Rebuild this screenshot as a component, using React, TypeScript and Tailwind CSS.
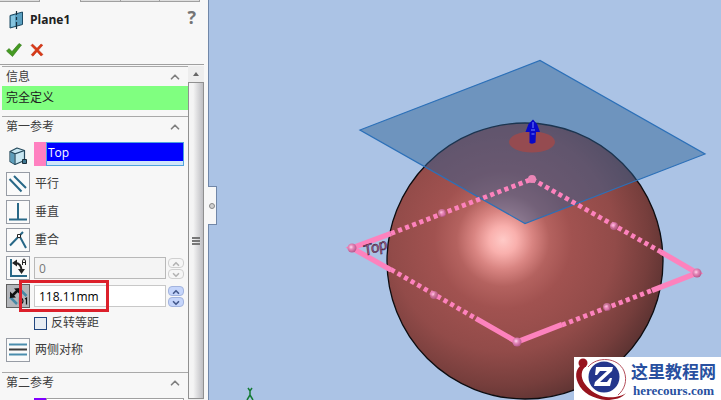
import type { ReactNode } from "react";
import { ChevronDown, ChevronUp } from "lucide-react";

type SectionHeaderProps = {
  title: string;
};

type ConstraintButtonProps = {
  label: string;
  pressed?: boolean;
  children: ReactNode;
};

type SpinnerProps = {
  name: string;
  disabled?: boolean;
};

const edgeMidpoints = [
  [442, 213],
  [614, 226],
  [434, 295],
  [607, 307],
];

const planeCorners = [
  [352, 248],
  [697, 273],
  [517, 342],
];

function SectionHeader({ title }: SectionHeaderProps) {
  return (
    <div className="flex h-5 shrink-0 items-center justify-between border-t border-[#a9a9a9] pr-1.5 pl-1">
      <h2>{title}</h2>
      <button type="button" aria-label={`Collapse ${title}`}>
        <ChevronUp className="h-3.5 w-3.5 text-[#808080]" strokeWidth={3} />
      </button>
    </div>
  );
}

function ConstraintButton({ label, pressed, children }: ConstraintButtonProps) {
  return (
    <button
      type="button"
      aria-label={label}
      aria-pressed={pressed ?? false}
      className={`h-6 w-6 shrink-0 border ${
        pressed ? "border-[#606060] bg-[#b4b6ba]" : "border-[#979ca5] bg-[#fafafa]"
      }`}
    >
      <svg viewBox="0 0 22 22" className="block h-full w-full" fill="none">
        {children}
      </svg>
    </button>
  );
}

function Spinner({ name, disabled }: SpinnerProps) {
  const tone = disabled
    ? "border-[#d0d0d0] bg-[#f6f6f6] text-[#b4b4b4]"
    : "border-[#a3b4de] bg-[#c5d5fb] text-[#44598c]";

  return (
    <div className="flex w-4 shrink-0 flex-col gap-px">
      <button
        type="button"
        disabled={disabled}
        aria-label={`Increase ${name}`}
        className={`grid h-2.5 place-items-center rounded-sm border ${tone}`}
      >
        <ChevronUp className="h-2.5 w-2.5" strokeWidth={4} />
      </button>
      <button
        type="button"
        disabled={disabled}
        aria-label={`Decrease ${name}`}
        className={`grid h-2.5 place-items-center rounded-sm border ${tone}`}
      >
        <ChevronDown className="h-2.5 w-2.5" strokeWidth={4} />
      </button>
    </div>
  );
}

function PlaneIcon() {
  return (
    <svg viewBox="0 0 16 20" className="h-5 w-4" fill="none">
      <path d="M2 5.500 14.500 2v12.500L2 18z" fill="#5a9fc0" stroke="#1c4a63" />
      <path d="M3 6.300 7 5.200v10.500L3 16.700z" fill="#85c4df" />
      <path d="M8.500 1v4M8.500 7v3M8.500 12v7" stroke="#16303f" strokeWidth="1.200" />
    </svg>
  );
}

function CubeIcon() {
  return (
    <svg viewBox="0 0 20 20" className="h-5 w-5" fill="none">
      <path
        d="M2 5.500 9 2l7.500 2.500v10L7 18.500 2 15.500z"
        fill="#c9e8f3"
        stroke="#24495c"
        strokeWidth="1.200"
        strokeLinejoin="round"
      />
      <path d="M2.500 6 6.500 8v10L2.500 15.500z" fill="#5b9dbb" />
      <path d="m2 5.500 5 2.300 9.500-3.300M7 8v10.500" stroke="#24495c" strokeWidth="1.200" />
      <path d="M14.500 13.500h4v4h-4z" fill="#3e7791" stroke="#1b303b" />
    </svg>
  );
}

function ReferencePanel() {
  return (
    <aside className="relative flex w-[209px] shrink-0 flex-col border-r border-[#7187a8] bg-[#f7f7f7] font-['Open_Sans','Noto_Sans_CJK_SC',sans-serif] text-xs text-[#3c3c3c]">
      <div className="flex h-0.5 shrink-0 pr-2">
        <div className="w-10 border-r border-b border-[#a0a0a0] bg-[#dedede]" />
        <div className="w-10" />
        <div className="flex-1 border-b border-l border-[#a0a0a0] bg-[#dedede]" />
        <div className="flex-1 border-b border-l border-[#a0a0a0] bg-[#dedede]" />
        <div className="flex-1 border-x border-b border-[#a0a0a0] bg-[#dedede]" />
      </div>

      <header className="mr-1 flex h-[63px] shrink-0 flex-col border-b border-[#a0a0a0] pt-1.5">
        <div className="flex h-6 items-center pr-2 pl-2">
          <PlaneIcon />
          <h1 className="ml-1.5 font-bold text-[#202020]">Plane1</h1>
          <button
            type="button"
            aria-label="Help"
            className="ml-auto h-6 pb-1.5 text-lg leading-4 font-bold text-[#747474]"
          >
            ?
          </button>
        </div>
        <div className="mt-2.5 flex items-center gap-2 pl-1.5">
          <button type="button" aria-label="OK">
            <svg viewBox="0 0 16 16" className="block h-4 w-4">
              <path
                d="m.5 9 2.500-2.500 3 3L13 1.500l2.500 1.500L6.500 14.500z"
                fill="#459a22"
                stroke="#2c7512"
                strokeWidth=".6"
              />
            </svg>
          </button>
          <button type="button" aria-label="Cancel">
            <svg viewBox="0 0 14 14" className="block h-3.5 w-3.5">
              <path
                d="M1 2.500 2.500 1 7 5.300 11 1l1.800 1.200L8.500 7l4.500 4.500-2 1.500-4-4.300L3 13.200 1.200 11.700 5.500 7z"
                fill="#d93a17"
                stroke="#b82208"
                strokeWidth=".5"
              />
            </svg>
          </button>
        </div>
      </header>

      <div className="mr-1 flex min-h-0 flex-1 pt-px">
        <div className="flex min-w-0 flex-1 flex-col overflow-hidden pl-0.5">
          <SectionHeader title="信息" />
          <p className="flex h-6 shrink-0 items-center bg-[#80ff80] pl-1 text-[#202020]">
            完全定义
          </p>

          <div className="mt-1.5 shrink-0">
            <SectionHeader title="第一参考" />
          </div>

          <div className="mt-1.5 flex shrink-0 flex-col gap-1 pr-1 pl-1">
            <div className="flex h-[26px] items-start gap-2">
              <div className="w-5 pt-1 pl-0.5">
                <CubeIcon />
              </div>
              <div className="flex h-6 flex-1">
                <div className="w-3 bg-[#ff80c0]" />
                <div className="flex-1 border border-[#4fa3dd] bg-[#cfe5fa] pb-1">
                  <input
                    type="text"
                    aria-label="Reference entity"
                    defaultValue="Top"
                    className="block h-[18px] w-full bg-[#0000ff] pl-px text-white outline-none"
                  />
                </div>
              </div>
            </div>

            <div className="flex items-center gap-[5px]">
              <ConstraintButton label="平行">
                <path d="m2.500 6 12 12.500M7 3l12 12" stroke="#286887" strokeWidth="2" />
              </ConstraintButton>
              <span>平行</span>
            </div>
            <div className="flex items-center gap-[5px]">
              <ConstraintButton label="垂直">
                <path d="M11 2v16M2 18.500h18" stroke="#286887" strokeWidth="2" />
              </ConstraintButton>
              <span>垂直</span>
            </div>
            <div className="flex items-center gap-[5px]">
              <ConstraintButton label="重合">
                <path d="m3 16.500 13-13.500M12.500 7l6.500 12" stroke="#286887" strokeWidth="2" />
                <path d="M10.500 5.500h3v3h-3z" fill="#fff" stroke="#222" />
              </ConstraintButton>
              <span>重合</span>
            </div>

            <div className="flex items-center gap-1">
              <ConstraintButton label="Angle">
                <path d="M4 2v17h16" stroke="#286887" strokeWidth="2" />
                <path d="M8 6c4 0 6.500 3 6.500 8" stroke="#222" strokeWidth="2" />
                <path d="m5 6 5-3.500v7zM11 12h7l-3.500 5z" fill="#222" />
                <path d="M15.500 8V4l1-2h1l1 2v4M15.500 5.500h3" stroke="#222" />
              </ConstraintButton>
              <input
                type="text"
                aria-label="Angle value"
                defaultValue="0"
                disabled
                className="h-[22px] min-w-0 flex-1 border border-[#b8b8b8] bg-[#f4f4f4] pl-1 text-[#777777]"
              />
              <div className="-ml-0.5">
                <Spinner name="angle" disabled />
              </div>
            </div>

            <div className="relative flex items-center gap-1">
              <ConstraintButton label="Offset distance" pressed>
                <path d="m3 12 7 7M12.500 4l7 7" stroke="#4788a5" strokeWidth="2.500" />
                <path d="m5.500 10.500 5-5" stroke="#111" strokeWidth="2.500" />
                <path d="M3 6.500 9 12.500l-6 .500zM7 3.500 13 3l-.500 6z" fill="#111" />
                <path
                  d="M12.500 13v6h1.500q2-.500 2-3t-2-3zM18 14l1.500-1v6.500"
                  stroke="#111"
                  strokeWidth="1.200"
                />
              </ConstraintButton>
              <input
                type="text"
                aria-label="Offset distance value"
                defaultValue="118.11mm"
                className="h-[22px] min-w-0 flex-1 border border-[#c8c8c8] bg-white pl-1 text-black outline-none"
              />
              <div className="-ml-0.5">
                <Spinner name="offset distance" />
              </div>
              <div className="pointer-events-none absolute -top-1 left-[13px] h-8 w-[90px] border-[3px] border-[#dc202b]" />
            </div>

            <label className="flex h-[22px] items-center gap-1 pl-7">
              <input
                type="checkbox"
                className="h-[13px] w-[13px] appearance-none border border-[#21467f] bg-[#e8edf3]"
              />
              反转等距
            </label>

            <div className="flex items-center gap-[5px]">
              <ConstraintButton label="两侧对称">
                <path d="M2 5.500h18M2 15.500h18" stroke="#4b8dad" strokeWidth="2" />
                <path d="M2 10.500h18" stroke="#3c3c3c" strokeWidth="2" />
              </ConstraintButton>
              <span>两侧对称</span>
            </div>
          </div>

          <div className="mt-2.5 shrink-0">
            <SectionHeader title="第二参考" />
          </div>
          <div className="mt-1.5 mr-1 ml-8 flex h-6 shrink-0">
            <div className="w-3 bg-[#8000ff]" />
            <div className="flex-1 border border-[#a0a0a0] bg-white" />
          </div>
        </div>

        <div className="flex w-4 shrink-0 flex-col bg-[#ededed]">
          <div className="grid h-4 place-items-center">
            <svg viewBox="0 0 6 4" className="h-1 w-1.5">
              <path d="M0 4 3 0l3 4z" fill="#666" />
            </svg>
          </div>
          <div className="mb-px flex flex-1 flex-col items-center justify-center gap-px border border-[#909090] bg-linear-to-r from-[#f4f4f4] from-30% to-[#bebec2]">
            <div className="h-0.5 w-2 bg-[#777777]" />
            <div className="h-0.5 w-2 bg-[#777777]" />
            <div className="h-0.5 w-2 bg-[#777777]" />
          </div>
        </div>
      </div>

      <button
        type="button"
        aria-label="Collapse panel"
        className="absolute top-[186px] -right-[9px] z-10 grid h-[39px] w-[9px] place-items-center border border-l-0 border-[#7187a8] bg-[#f7f7f7]"
      >
        <span className="h-1.5 w-1.5 rounded-full border border-[#888888] bg-[#d0d0d0]" />
      </button>
    </aside>
  );
}

function ModelView() {
  return (
    <svg
      viewBox="209 0 512 400"
      preserveAspectRatio="xMidYMid slice"
      className="absolute h-full w-full"
      fill="none"
    >
      <defs>
        <radialGradient id="sphere" cx="503" cy="240" r="172" gradientUnits="userSpaceOnUse">
          <stop offset="0" stopColor="#ffcac7" />
          <stop offset=".08" stopColor="#f9b0ad" />
          <stop offset=".17" stopColor="#d98582" />
          <stop offset=".27" stopColor="#b4625f" />
          <stop offset=".4" stopColor="#a15250" />
          <stop offset=".65" stopColor="#924b49" />
          <stop offset=".85" stopColor="#763e3c" />
          <stop offset="1" stopColor="#583130" />
        </radialGradient>
        <radialGradient id="knob" cx=".4" cy=".4" r=".6">
          <stop offset="0" stopColor="#ffd9ee" />
          <stop offset=".4" stopColor="#e68bbb" />
          <stop offset="1" stopColor="#b9588e" />
        </radialGradient>
      </defs>

      <circle cx="525" cy="261" r="138" fill="url(#sphere)" stroke="#0c0c10" strokeWidth="1.300" />
      <path
        d="M360 130 540 60.500 705 154 525 223.500z"
        fill="#2b6195"
        fillOpacity=".48"
        stroke="#2c70b8"
        strokeWidth="1.200"
      />

      <ellipse cx="532" cy="142" rx="23" ry="10.500" fill="#954b50" />
      <path d="M529.500 142v-10h-4l3-8 4.500-4.500 4 4.500 3 8h-4l-.500 10.500q-3 2-6 .500z" fill="#0808c8" />
      <path d="M533 122v6M531 130h4M531.500 134h3" stroke="#7484ff" />

      <g stroke="#fd82bd" strokeWidth="4.800">
        <path
          d="m391 233.500 141-54.500M532 179l130 73.500M391 269.500l85 49M562 325l91-35"
          strokeDasharray="4.200 3.400"
        />
        <path
          d="M391 233.500 352 248l39 22M476 318.500l41 23.500 45-17.500M661 252l36 21-45 17.500"
          strokeWidth="5.400"
        />
      </g>

      {edgeMidpoints.map(([x, y]) => (
        <circle key={x} cx={x} cy={y} r="4" fill="url(#knob)" fillOpacity=".75" />
      ))}
      <circle cx="532" cy="179" r="4" fill="#ea86b6" />
      {planeCorners.map(([x, y]) => (
        <circle key={x} cx={x} cy={y} r="4.500" fill="url(#knob)" />
      ))}

      <text
        x="365"
        y="256"
        transform="rotate(-18 365 256)"
        fill="#c76fa5"
        stroke="#3b2039"
        strokeWidth=".6"
        className="font-['Liberation_Sans',sans-serif] text-[15px] italic"
      >
        Top
      </text>

      <path d="m248 388 2 3 2-3M250 391v4l-3 5M250 395l3 5" stroke="#137a33" strokeWidth="1.500" />
    </svg>
  );
}

function Watermark() {
  return (
    <a
      href="#home"
      className="absolute right-0 bottom-0 flex h-[43px] w-[147px] items-center bg-white text-[#2850a0]"
    >
      <svg viewBox="0 0 57 43" className="h-full w-[57px] shrink-0" fill="none">
        <path d="M14 10C23-1 44 0 50 14c4 10 0 19-6 24" stroke="#b5505c" />
        <circle cx="30" cy="20" r="15.500" fill="#24368c" />
        <path
          d="M12 9C7 13 6 20 11 27c5 7 13 12 21 13 9 1 16-1 20-4-4 5-11 7-20 7-12-1-24-7-28-17C0 17 3 10 9 7z"
          fill="#97131d"
        />
        <circle cx="9" cy="6" r="4.500" fill="#97131d" />
        <path d="M22 10h17l-1 4-12 11h7l3-4h2l-2 8H20l1-4 12-11h-7l-3 4h-2z" fill="#fff" />
      </svg>
      <span className="flex flex-col items-center">
        <span className="font-['Noto_Sans_CJK_SC',sans-serif] text-[17px] leading-[25px] font-bold">
          这里教程网
        </span>
        <span className="font-['Liberation_Serif',serif] text-[13px] leading-4 font-bold">
          herecours.com
        </span>
      </span>
    </a>
  );
}

export default function App() {
  return (
    <div className="flex h-screen overflow-hidden">
      <ReferencePanel />
      <main className="relative min-w-0 flex-1 bg-[#abc3e5]">
        <ModelView />
        <Watermark />
      </main>
    </div>
  );
}
